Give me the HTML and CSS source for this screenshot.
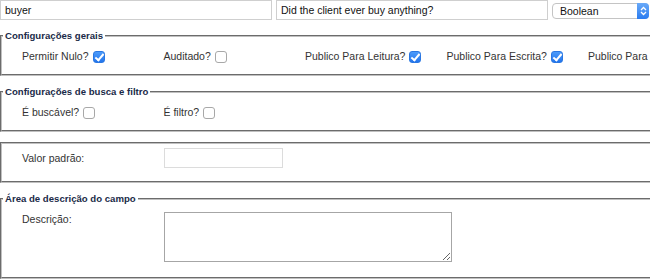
FILE: index.html
```html
<!DOCTYPE html>
<html lang="pt">
<head>
  <meta charset="UTF-8" />
  <title>Campo</title>
  <meta name="viewport" content="width=device-width, initial-scale=1.0"/>
  <link rel="stylesheet" href="styles.css">
</head>
<body>

  <!-- Cabeçalho do campo -->
  <div class="field-head">
    <input type="text" class="text-input wide" value="buyer">
    <input type="text" class="text-input wide" value="Did the client ever buy anything?">
    <div class="select-box">
      <select class="type-select">
        <option>Boolean</option>
        <option>String</option>
        <option>Integer</option>
      </select>
      <span class="select-arrow">
        <svg width="7" height="10" viewBox="0 0 7 10">
          <path d="M1 4 L3.5 1.5 L6 4 M1 6 L3.5 8.5 L6 6" fill="none" stroke="#fff" stroke-width="1.3"/>
        </svg>
      </span>
    </div>
  </div>

  <!-- Configurações gerais -->
  <fieldset class="box">
    <legend>Configurações gerais</legend>
    <div class="row check-row">
      <label class="cell">Permitir Nulo? <input type="checkbox" checked></label>
      <label class="cell">Auditado? <input type="checkbox"></label>
      <label class="cell">Publico Para Leitura? <input type="checkbox" checked></label>
      <label class="cell">Publico Para Escrita? <input type="checkbox" checked></label>
      <label class="cell">Publico Para Listagem? <input type="checkbox" checked></label>
    </div>
  </fieldset>

  <!-- Busca e filtro -->
  <fieldset class="box">
    <legend>Configurações de busca e filtro</legend>
    <div class="row check-row">
      <label class="cell">É buscável? <input type="checkbox"></label>
      <label class="cell">É filtro? <input type="checkbox"></label>
    </div>
  </fieldset>

  <!-- Valor padrão -->
  <fieldset class="box">
    <div class="row value-row">
      <label class="cell">Valor padrão:</label>
      <input type="text" class="text-input short">
    </div>
  </fieldset>

  <!-- Descrição -->
  <fieldset class="box">
    <legend>Área de descrição do campo</legend>
    <div class="row desc-row">
      <label class="cell">Descrição:</label>
      <textarea class="desc-input"></textarea>
    </div>
  </fieldset>

</body>
</html>
```

FILE: styles.css
```css
* {
  box-sizing: border-box;
}

body {
  margin: 0;
  font-family: 'Liberation Sans', Arial, sans-serif;
  font-size: 10.5px;
  color: #333;
  background: #fff;
  overflow: hidden;
}

.field-head {
  display: flex;
  align-items: center;
  gap: 4px;
  height: 20px;
  margin-bottom: 10px;
}

.text-input {
  height: 20px;
  border: 1px solid #cfcfcf;
  padding: 0 4px;
  font-family: inherit;
  font-size: 10.5px;
  color: #111;
  outline: none;
}

.text-input.wide {
  width: 272px;
}

.select-box {
  position: relative;
  width: 97px;
  height: 16px;
  margin-top: 2px;
}

.type-select {
  appearance: none;
  width: 100%;
  height: 16px;
  border: 1px solid #c4c4c4;
  border-radius: 4px;
  background: #fff;
  padding: 0 0 0 7px;
  font-family: inherit;
  font-size: 10.5px;
  color: #111;
  outline: none;
}

.select-arrow {
  position: absolute;
  top: 0;
  right: 0;
  width: 12px;
  height: 16px;
  border-radius: 0 4px 4px 0;
  background: linear-gradient(#6aaaf8, #2a7cf0);
  display: flex;
  align-items: center;
  justify-content: center;
}

.box {
  width: 780px;
  margin: 0 0 10px;
  padding: 0;
  border: 2px groove #c0c0c0;
  min-width: 0;
}

legend {
  margin-left: 1px;
  padding: 0 2px;
  font-size: 9.6px;
  font-weight: bold;
  color: #1a2a48;
}

.row {
  display: grid;
  grid-template-columns: repeat(5, 141.5px);
  padding-left: 20px;
}

.cell {
  display: flex;
  align-items: center;
  white-space: nowrap;
  line-height: 13px;
}

.check-row {
  padding-top: 9px;
  padding-bottom: 11px;
}

.value-row {
  align-items: center;
  padding-top: 4px;
  padding-bottom: 13px;
}

.desc-row {
  align-items: start;
  padding-top: 8px;
  padding-bottom: 15px;
}

.desc-row .cell {
  padding-top: 1px;
}

.text-input.short {
  width: 119px;
  border-color: #dcdcdc;
}

.desc-input {
  grid-column: span 3;
  width: 288px;
  height: 50px;
  border: 1px solid #a6a6a6;
  font-family: inherit;
  font-size: 10.5px;
  outline: none;
}

input[type="checkbox"] {
  appearance: none;
  position: relative;
  width: 12px;
  height: 12px;
  margin: 0 0 0 4px;
  border: 1px solid #a8a8a8;
  border-radius: 3px;
  background: #fff;
}

input[type="checkbox"]:checked {
  border-color: #2a77e2;
  background: linear-gradient(#4c9bfa, #2375ec);
}

input[type="checkbox"]:checked::after {
  content: '';
  position: absolute;
  left: 3px;
  top: 0px;
  width: 3px;
  height: 7px;
  border: solid #fff;
  border-width: 0 2px 2px 0;
  transform: rotate(40deg);
}
```
